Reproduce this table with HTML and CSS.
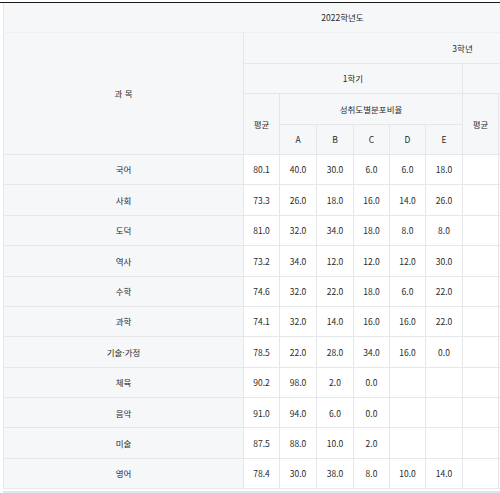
FILE: index.html
```html
<!DOCTYPE html>
<html lang="ko">
<head>
<meta charset="utf-8">
<title>성적</title>
<link rel="stylesheet" href="styles.css">
</head>
<body>
<div class="board">
  <table class="grade">
    <colgroup>
      <col class="c-subj">
      <col class="c-n"><col class="c-w"><col class="c-w"><col class="c-n"><col class="c-n"><col class="c-w">
      <col class="c-n"><col class="c-w"><col class="c-w"><col class="c-n"><col class="c-n"><col class="c-w">
    </colgroup>
    <thead>
      <tr><th colspan="13" class="top">2022학년도</th></tr>
      <tr><th rowspan="4">과 목</th><th colspan="12">3학년</th></tr>
      <tr><th colspan="6">1학기</th><th colspan="6"></th></tr>
      <tr><th rowspan="2">평균</th><th colspan="5">성취도별분포비율</th><th rowspan="2">평균</th><th colspan="5"></th></tr>
      <tr><th>A</th><th>B</th><th>C</th><th>D</th><th>E</th><th></th><th></th><th></th><th></th><th></th></tr>
    </thead>
    <tbody>
      <tr><th>국어</th><td>80.1</td><td>40.0</td><td>30.0</td><td>6.0</td><td>6.0</td><td>18.0</td><td></td><td></td><td></td><td></td><td></td><td></td></tr>
      <tr><th>사회</th><td>73.3</td><td>26.0</td><td>18.0</td><td>16.0</td><td>14.0</td><td>26.0</td><td></td><td></td><td></td><td></td><td></td><td></td></tr>
      <tr><th>도덕</th><td>81.0</td><td>32.0</td><td>34.0</td><td>18.0</td><td>8.0</td><td>8.0</td><td></td><td></td><td></td><td></td><td></td><td></td></tr>
      <tr><th>역사</th><td>73.2</td><td>34.0</td><td>12.0</td><td>12.0</td><td>12.0</td><td>30.0</td><td></td><td></td><td></td><td></td><td></td><td></td></tr>
      <tr><th>수학</th><td>74.6</td><td>32.0</td><td>22.0</td><td>18.0</td><td>6.0</td><td>22.0</td><td></td><td></td><td></td><td></td><td></td><td></td></tr>
      <tr><th>과학</th><td>74.1</td><td>32.0</td><td>14.0</td><td>16.0</td><td>16.0</td><td>22.0</td><td></td><td></td><td></td><td></td><td></td><td></td></tr>
      <tr><th>기술·가정</th><td>78.5</td><td>22.0</td><td>28.0</td><td>34.0</td><td>16.0</td><td>0.0</td><td></td><td></td><td></td><td></td><td></td><td></td></tr>
      <tr><th>체육</th><td>90.2</td><td>98.0</td><td>2.0</td><td>0.0</td><td></td><td></td><td></td><td></td><td></td><td></td><td></td><td></td></tr>
      <tr><th>음악</th><td>91.0</td><td>94.0</td><td>6.0</td><td>0.0</td><td></td><td></td><td></td><td></td><td></td><td></td><td></td><td></td></tr>
      <tr><th>미술</th><td>87.5</td><td>88.0</td><td>10.0</td><td>2.0</td><td></td><td></td><td></td><td></td><td></td><td></td><td></td><td></td></tr>
      <tr><th>영어</th><td>78.4</td><td>30.0</td><td>38.0</td><td>8.0</td><td>10.0</td><td>14.0</td><td></td><td></td><td></td><td></td><td></td><td></td></tr>
    </tbody>
  </table>
  <div class="hscroll"></div>
</div>
</body>
</html>
```

FILE: styles.css
```css
html, body {
  margin: 0;
  padding: 0;
  background: #fff;
  overflow: hidden;
}
.board {
  margin-top: 2px;
  border-top: 1px solid #1a1a1a;
  padding-left: 3px;
  width: 700px;
}
.grade {
  border-collapse: collapse;
  table-layout: fixed;
  width: 678px;
  font-family: "Noto Sans CJK KR", "Noto Sans", sans-serif;
  font-size: 8.5px;
  color: #2a2a2a;
  border-left: 1px solid #e3e4e6;
}
.c-subj { width: 240px; }
.c-n { width: 36px; }
.c-w { width: 37px; }
.grade th, .grade td {
  height: 29.4px;
  padding: 0;
  text-align: center;
  vertical-align: middle;
  border: 1px solid #e6e7e9;
  font-weight: normal;
  line-height: 1;
}
.grade th {
  background: #f6f7f9;
}
.grade thead tr:first-child th {
  border-top: none;
  border-bottom-color: #eff0f2;
}
.grade td {
  background: #fff;
}
.hscroll {
  margin-top: 2px;
  height: 4px;
  background: #dce6f4;
}
```
